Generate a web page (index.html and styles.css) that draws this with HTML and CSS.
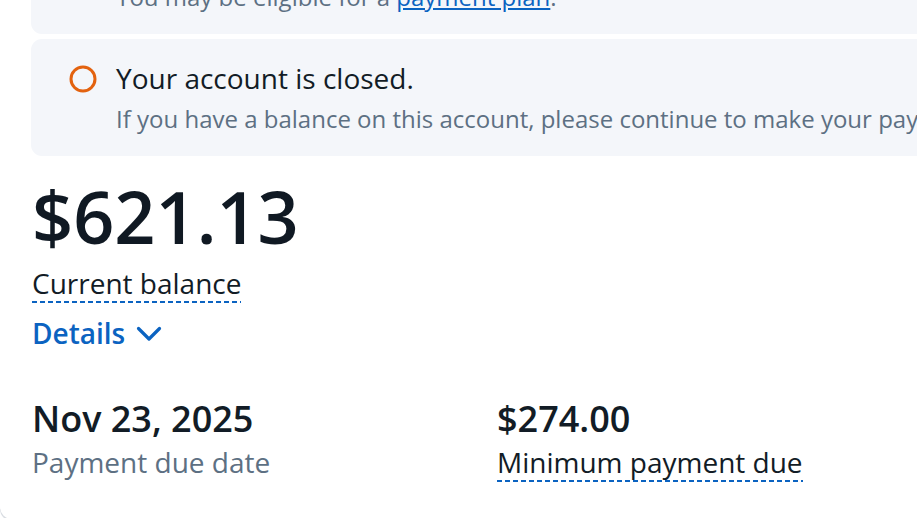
FILE: index.html
```html
<!DOCTYPE html>
<html lang="en">
<head>
<meta charset="utf-8">
<title>Account summary</title>
<link rel="stylesheet" href="styles.css">
</head>
<body>
<div class="card">
  <div class="alerts">
    <div class="alert">
      <svg class="alert-icon" viewBox="0 0 28 28" aria-hidden="true"><circle cx="14" cy="14" r="12" fill="none" stroke="#e3620f" stroke-width="3"/></svg>
      <div class="alert-body">
        <p class="alert-title">Your payment is past due.</p>
        <p class="alert-text">You may be eligible for a <a href="#" class="link">payment plan</a>.</p>
      </div>
    </div>
    <div class="alert">
      <svg class="alert-icon" viewBox="0 0 28 28" aria-hidden="true"><circle cx="14" cy="14" r="12" fill="none" stroke="#e3620f" stroke-width="3"/></svg>
      <div class="alert-body">
        <p class="alert-title">Your account is closed.</p>
        <p class="alert-text">If you have a balance on this account, please continue to make your payments on time.</p>
      </div>
    </div>
  </div>

  <div class="balance">
    <div class="balance-amount">$621.13</div>
    <div class="balance-label"><span class="dotted">Current balance</span></div>
    <button class="details">Details
      <svg class="chev" viewBox="0 0 26 18" aria-hidden="true"><path d="M2.5 3.5 L13 14 L23.5 3.5" fill="none" stroke="#0b63c1" stroke-width="3.2" stroke-linecap="round" stroke-linejoin="round"/></svg>
    </button>
  </div>

  <div class="stats">
    <div class="stat">
      <div class="stat-value">Nov 23, 2025</div>
      <div class="stat-label">Payment due date</div>
    </div>
    <div class="stat">
      <div class="stat-value">$274.00</div>
      <div class="stat-label"><span class="dotted">Minimum payment due</span></div>
    </div>
  </div>
</div>
</body>
</html>
```

FILE: styles.css
```css
html, body {
  margin: 0;
  padding: 0;
  background: #ffffff;
  overflow: hidden;
}
body {
  font-family: "Open Sans", "Noto Sans", sans-serif;
  color: #121c26;
}
p { margin: 0; }

.card {
  margin-top: -107px;
  width: 1160px;
  background: #ffffff;
  border-radius: 12px;
  box-shadow: 0 2px 0 #d9dde2;
  padding: 24px 0 37px 31px;
  box-sizing: border-box;
}

.alerts {
  display: flex;
  flex-direction: column;
  gap: 5px;
}
.alert {
  display: flex;
  align-items: flex-start;
  gap: 19px;
  background: #f4f6fa;
  border-radius: 11px;
  padding: 20px 24px 21px 38px;
}
.alert-icon {
  width: 28px;
  height: 28px;
  flex: none;
  margin-top: 6px;
}
.alert-title {
  font-size: 28px;
  line-height: 38px;
  color: #121c26;
  white-space: nowrap;
}
.alert-text {
  font-size: 24px;
  line-height: 32px;
  margin-top: 6px;
  color: #5d7083;
  white-space: nowrap;
}
.link {
  color: #0b63c1;
}

.balance {
  padding-left: 1px;
  margin-top: 16px;
}
.balance-amount {
  font-size: 72px;
  line-height: 88px;
  font-weight: 600;
  color: #101923;
}
.balance-label {
  margin-top: 5px;
}
.dotted {
  display: inline-block;
  font-size: 28px;
  line-height: 36px;
  padding-bottom: 2px;
  background-image: linear-gradient(to right, #0b63c1 5px, transparent 5px);
  background-size: 8px 2px;
  background-repeat: repeat-x;
  background-position: left bottom;
  color: #121c26;
}
.details {
  display: flex;
  align-items: center;
  gap: 11px;
  margin-top: 12px;
  padding: 0;
  border: 0;
  background: none;
  font-family: inherit;
  font-size: 28px;
  line-height: 36px;
  font-weight: 600;
  color: #0b63c1;
}
.chev {
  width: 26px;
  height: 18px;
  margin-top: 2px;
}

.stats {
  display: grid;
  grid-template-columns: 465px 1fr;
  margin-top: 47px;
  padding-left: 1px;
}
.stat-value {
  font-size: 36px;
  line-height: 42px;
  font-weight: 600;
  color: #121c26;
}
.stat-label {
  margin-top: 4px;
  font-size: 28px;
  line-height: 36px;
  color: #5d7083;
}
```
